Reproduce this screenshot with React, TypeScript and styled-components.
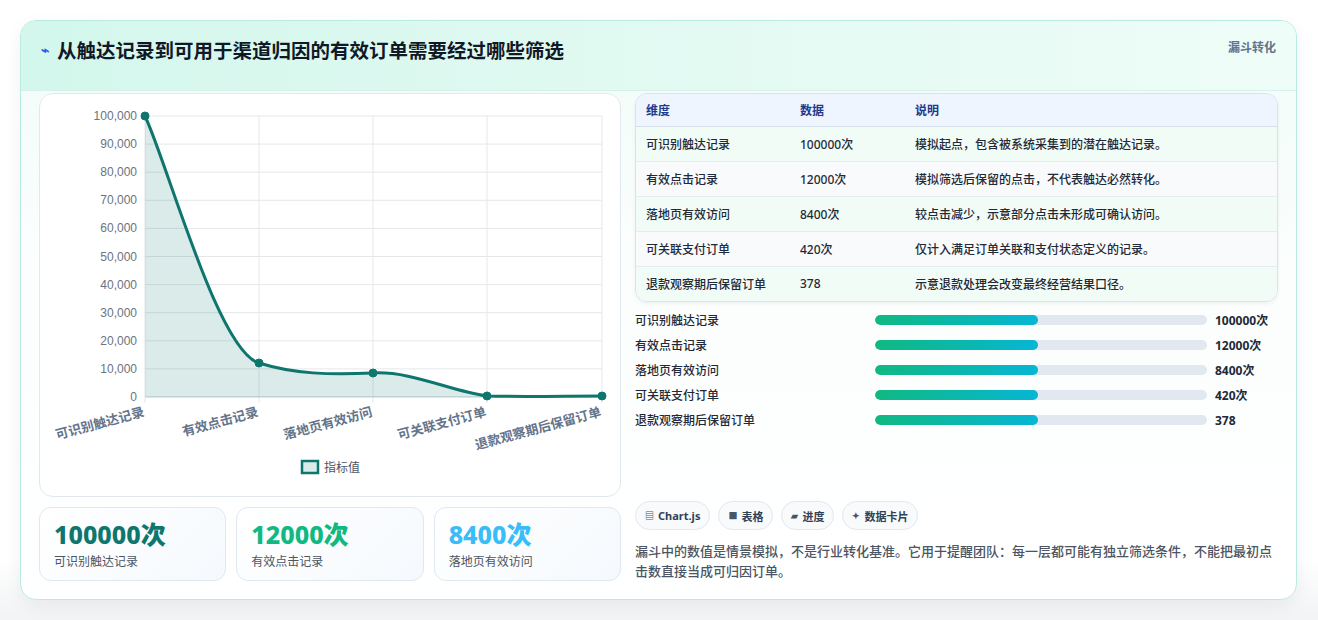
import React from 'react';
import styled, { createGlobalStyle } from 'styled-components';

const GlobalStyle = createGlobalStyle`
  * { margin: 0; padding: 0; box-sizing: border-box; }
  body {
    font-family: 'Noto Sans', 'Noto Sans CJK SC', sans-serif;
    background: #ffffff;
    color: #1f2937;
  }
`;

const rows = [
  { name: '可识别触达记录', value: '100000次', note: '模拟起点，包含被系统采集到的潜在触达记录。' },
  { name: '有效点击记录', value: '12000次', note: '模拟筛选后保留的点击，不代表触达必然转化。' },
  { name: '落地页有效访问', value: '8400次', note: '较点击减少，示意部分点击未形成可确认访问。' },
  { name: '可关联支付订单', value: '420次', note: '仅计入满足订单关联和支付状态定义的记录。' },
  { name: '退款观察期后保留订单', value: '378', note: '示意退款处理会改变最终经营结果口径。' },
];

// chart geometry (card coordinates)
const plot = { left: 105, right: 562, top: 22, bottom: 303 };
const xs = [105, 219, 333, 447, 562];
const yTicks = [100000, 90000, 80000, 70000, 60000, 50000, 40000, 30000, 20000, 10000, 0];
const yOf = (v: number) => plot.bottom - (v / 100000) * (plot.bottom - plot.top);
const linePath =
  'M105,22 C128,71 178,257 219,269 C254,280 290,281 333,279 C372,277 410,297 447,302 C485,303 525,302 562,302';

const Chart: React.FC = () => (
  <svg width="580" height="401" viewBox="0 0 580 401">
    {yTicks.map((t) => (
      <g key={t}>
        <line x1={plot.left} x2={plot.right} y1={yOf(t)} y2={yOf(t)} stroke="#e5e7eb" />
        <text x={97} y={yOf(t) + 4} textAnchor="end" fontSize="12" fill="#6b7280" fontFamily="Liberation Sans, sans-serif">
          {t.toLocaleString('en-US')}
        </text>
      </g>
    ))}
    {xs.map((x) => (
      <line key={x} x1={x} x2={x} y1={plot.top} y2={plot.bottom + 6} stroke="#e5e7eb" />
    ))}
    <line x1={plot.left} x2={plot.right} y1={plot.bottom} y2={plot.bottom} stroke="#cbd5e1" />
    <path d={`${linePath} L562,303 L105,303 Z`} fill="rgba(15,118,110,0.15)" />
    <path d={linePath} fill="none" stroke="#0f766e" strokeWidth="3" />
    {[22, 269, 279, 302, 302].map((y, i) => (
      <circle key={i} cx={xs[i]} cy={y} r="4" fill="#0f766e" stroke="#0f766e" />
    ))}
    {rows.map((r, i) => (
      <text
        key={r.name}
        x={xs[i]}
        y={322}
        textAnchor="end"
        fontSize="13"
        fontWeight="600"
        fill="#64748b"
        transform={`rotate(-15 ${xs[i]} 322)`}
      >
        {r.name}
      </text>
    ))}
    <rect x={262} y={367} width={16} height={12} fill="rgba(15,118,110,0.15)" stroke="#0f766e" strokeWidth="2.5" />
    <text x={284} y={378} fontSize="12" fill="#4b5563">指标值</text>
  </svg>
);

const kpis = [
  { value: '100000次', label: '可识别触达记录', color: '#0f766e' },
  { value: '12000次', label: '有效点击记录', color: '#10b981' },
  { value: '8400次', label: '落地页有效访问', color: '#38bdf8' },
];

const chips = [
  { icon: '▤', text: 'Chart.js' },
  { icon: '■', text: '表格' },
  { icon: '▰', text: '进度' },
  { icon: '✦', text: '数据卡片' },
];

const App: React.FC = () => (
  <>
    <GlobalStyle />
    <Page>
      <Card>
        <Header>
          <Title>
            <Bolt>⌁</Bolt>从触达记录到可用于渠道归因的有效订单需要经过哪些筛选
          </Title>
          <Tag>漏斗转化</Tag>
        </Header>
        <Body>
          <LeftCol>
            <ChartCard>
              <Chart />
            </ChartCard>
            <KpiRow>
              {kpis.map((k) => (
                <Kpi key={k.label}>
                  <KpiValue $color={k.color}>{k.value}</KpiValue>
                  <KpiLabel>{k.label}</KpiLabel>
                </Kpi>
              ))}
            </KpiRow>
          </LeftCol>
          <RightCol>
            <TableWrap>
              <Table>
                <thead>
                  <tr>
                    <Th style={{ width: 154 }}>维度</Th>
                    <Th style={{ width: 115 }}>数据</Th>
                    <Th>说明</Th>
                  </tr>
                </thead>
                <tbody>
                  {rows.map((r, i) => (
                    <Tr key={r.name} $alt={i % 2 === 1}>
                      <Td>{r.name}</Td>
                      <Td>{r.value}</Td>
                      <Td>{r.note}</Td>
                    </Tr>
                  ))}
                </tbody>
              </Table>
            </TableWrap>
            <Bars>
              {rows.map((r) => (
                <BarRow key={r.name}>
                  <BarLabel>{r.name}</BarLabel>
                  <Track>
                    <Fill style={{ width: '49%' }} />
                  </Track>
                  <BarValue>{r.value}</BarValue>
                </BarRow>
              ))}
            </Bars>
            <Chips>
              {chips.map((c) => (
                <Chip key={c.text}>
                  <ChipIcon>{c.icon}</ChipIcon>
                  {c.text}
                </Chip>
              ))}
            </Chips>
            <Note>
              漏斗中的数值是情景模拟，不是行业转化基准。它用于提醒团队：每一层都可能有独立筛选条件，不能把最初点击数直接当成可归因订单。
            </Note>
          </RightCol>
        </Body>
      </Card>
    </Page>
  </>
);

const Page = styled.div`
  padding: 20px 21px 20px 20px;
  width: 1318px;
  height: 620px;
  background: linear-gradient(180deg, #ffffff 0%, #ffffff 90%, #f1f3f4 100%);
`;

const Card = styled.div`
  width: 1277px;
  height: 580px;
  border: 1px solid #b8ebe2;
  border-radius: 16px;
  overflow: hidden;
  background: linear-gradient(180deg, #effcf7 0%, #fbfefd 40%, #ffffff 100%);
  box-shadow: 0 6px 18px rgba(15, 23, 42, 0.06);
`;

const Header = styled.div`
  height: 70px;
  display: flex;
  justify-content: space-between;
  align-items: flex-start;
  padding: 14px 20px 0 20px;
  background: linear-gradient(90deg, #d3f7ec 0%, #e4faf3 60%, #effdf8 100%);
  border-bottom: 1px solid #d7f1ea;
`;

const Title = styled.h1`
  display: flex;
  align-items: center;
  gap: 8px;
  font-size: 19.5px;
  font-weight: 700;
  color: #111827;
`;

const Bolt = styled.span`
  color: #2563eb;
  font-size: 14px;
`;

const Tag = styled.span`
  font-size: 12px;
  font-weight: 700;
  color: #64748b;
  padding-top: 3px;
`;

const Body = styled.div`
  display: flex;
  gap: 14px;
  padding: 2px 18px 0 18px;
`;

const LeftCol = styled.div`
  width: 582px;
  display: flex;
  flex-direction: column;
  gap: 10px;
`;

const ChartCard = styled.div`
  height: 404px;
  background: #ffffff;
  border: 1px solid #e3e8ef;
  border-radius: 14px;
`;

const KpiRow = styled.div`
  display: grid;
  grid-template-columns: repeat(3, 1fr);
  gap: 10px;
`;

const Kpi = styled.div`
  height: 74px;
  padding: 10px 14px;
  border: 1px solid #dfe7f1;
  border-radius: 12px;
  background: linear-gradient(135deg, #ffffff 0%, #f5f9fd 100%);
`;

const KpiValue = styled.div<{ $color: string }>`
  font-size: 25px;
  font-weight: 800;
  line-height: 32px;
  color: ${(p) => p.$color};
`;

const KpiLabel = styled.div`
  font-size: 12px;
  color: #4b5563;
  margin-top: 2px;
`;

const RightCol = styled.div`
  width: 644px;
  display: flex;
  flex-direction: column;
`;

const TableWrap = styled.div`
  border: 1px solid #d9e2ec;
  border-radius: 12px;
  overflow: hidden;
  box-shadow: 0 2px 4px rgba(15, 23, 42, 0.05);
`;

const Table = styled.table`
  width: 100%;
  border-collapse: collapse;
  font-size: 12px;
`;

const Th = styled.th`
  text-align: left;
  height: 32px;
  padding: 0 10px;
  background: #eef5fe;
  color: #1e3a8a;
  font-weight: 700;
  border-bottom: 1px solid #d6e0ea;
`;

const Tr = styled.tr<{ $alt: boolean }>`
  background: ${(p) => (p.$alt ? '#f8fafc' : '#f1fcf6')};
`;

const Td = styled.td`
  height: 35px;
  padding: 0 10px;
  color: #1f2937;
  font-weight: 500;
  border-top: 1px solid #e5edf3;
`;

const Bars = styled.div`
  display: flex;
  flex-direction: column;
  gap: 9px;
  margin-top: 10px;
`;

const BarRow = styled.div`
  display: flex;
  align-items: center;
  height: 16px;
`;

const BarLabel = styled.span`
  width: 240px;
  font-size: 12px;
  font-weight: 500;
  color: #1f2937;
`;

const Track = styled.div`
  width: 332px;
  height: 10px;
  border-radius: 5px;
  background: #e2e8f0;
  overflow: hidden;
`;

const Fill = styled.div`
  height: 100%;
  border-radius: 5px;
  background: linear-gradient(90deg, #10b981 0%, #06b6d4 100%);
`;

const BarValue = styled.span`
  margin-left: 8px;
  font-size: 12px;
  font-weight: 700;
  color: #1f2937;
`;

const Chips = styled.div`
  display: flex;
  gap: 8px;
  margin-top: 73px;
`;

const Chip = styled.span`
  display: inline-flex;
  align-items: center;
  gap: 4px;
  height: 29px;
  padding: 0 9px;
  border: 1px solid #e2e8f0;
  border-radius: 15px;
  background: #f8fafc;
  font-size: 11px;
  font-weight: 700;
  color: #334155;
`;

const ChipIcon = styled.span`
  font-size: 9px;
  color: #475569;
`;

const Note = styled.p`
  margin-top: 11px;
  font-size: 13px;
  line-height: 20px;
  font-weight: 500;
  color: #4b5563;
`;

export default App;
